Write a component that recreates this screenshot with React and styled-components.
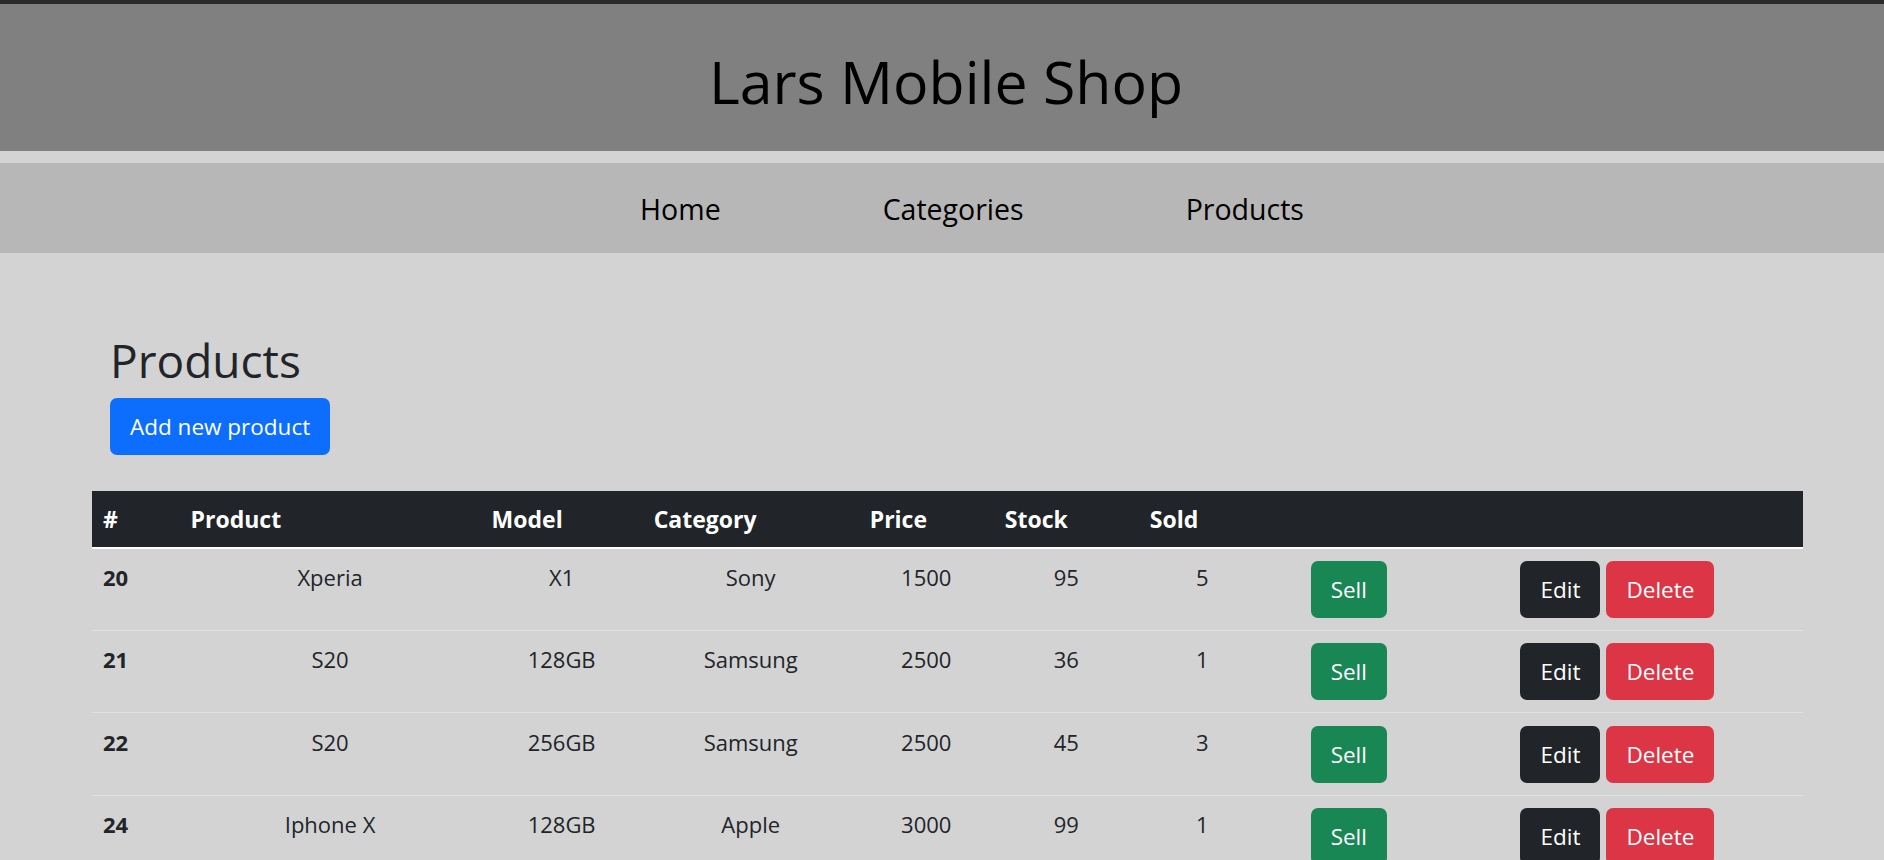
import React from "react";
import styled, { createGlobalStyle } from "styled-components";

const GlobalStyle = createGlobalStyle`
  body {
    margin: 0;
    background-color: #d3d3d3;
    font-family: "Open Sans", "Noto Sans", Arial, sans-serif;
    color: #212529;
  }
`;

// Page header with the shop name
const Header = styled.header`
  height: 151px;
  box-sizing: border-box;
  border-top: 4px solid #2b2b2b;
  background-color: #808080;
  display: flex;
  align-items: center;
  justify-content: center;
  padding-top: 6px;
`;

const ShopTitle = styled.h1`
  margin: 0 0 0 8px;
  font-size: 59px;
  font-weight: 400;
  color: #000;
  line-height: normal;
`;

const Nav = styled.nav`
  margin-top: 12px;
  height: 90px;
  background-color: #b7b7b7;
  display: flex;
  align-items: center;
  justify-content: center;
  gap: 162px;
  padding-left: 60px;
  padding-top: 2px;
  box-sizing: border-box;
`;

const NavLink = styled.a`
  font-size: 28.5px;
  color: #000;
  text-decoration: none;
  line-height: normal;
  cursor: pointer;
`;

const Main = styled.main`
  padding: 80px 81px 0 92px;
`;

const Intro = styled.div`
  padding-left: 18px;
  margin-bottom: 36px;
`;

const PageTitle = styled.h2`
  margin: 0 0 10px 0;
  font-size: 46px;
  font-weight: 500;
  line-height: 1.2;
  color: #212529;
`;

const colors = {
  primary: "#0d6efd",
  success: "#198754",
  dark: "#212529",
  danger: "#dc3545",
};

const Button = styled.button`
  display: inline-flex;
  align-items: center;
  justify-content: center;
  height: 57px;
  padding: 0 20px;
  border: none;
  border-radius: 7px;
  font-family: inherit;
  font-size: 22.5px;
  color: #fff;
  background-color: ${(p) => colors[p.$variant] || colors.primary};
  vertical-align: top;
  cursor: pointer;
`;

const Table = styled.table`
  width: 100%;
  border-collapse: collapse;
  table-layout: fixed;
`;

const Col = styled.col`
  width: ${(p) => p.$w}px;
`;

const HeadCell = styled.th`
  background-color: #212529;
  color: #fff;
  font-size: 23px;
  font-weight: 700;
  line-height: 1.5;
  text-align: left;
  padding: 10.5px 11px;
  border-bottom: 2px solid #fff;
`;

const Cell = styled.td`
  font-size: 22px;
  line-height: 1.5;
  text-align: ${(p) => (p.$left ? "left" : "center")};
  font-weight: ${(p) => (p.$bold ? 700 : 400)};
  vertical-align: top;
  padding: 12.2px 11px 12.2px;
  border-bottom: 1px solid #dee2e6;
  color: #212529;
`;

const ActionGroup = styled.div`
  display: flex;
  justify-content: center;
  gap: 6px;
`;

const columns = [
  { label: "#", width: 87.5 },
  { label: "Product", width: 301 },
  { label: "Model", width: 162 },
  { label: "Category", width: 216 },
  { label: "Price", width: 135 },
  { label: "Stock", width: 145 },
  { label: "Sold", width: 127 },
  { label: "", width: 166 },
  { label: "", width: 371 },
];

const products = [
  { id: 20, name: "Xperia", model: "X1", category: "Sony", price: 1500, stock: 95, sold: 5 },
  { id: 21, name: "S20", model: "128GB", category: "Samsung", price: 2500, stock: 36, sold: 1 },
  { id: 22, name: "S20", model: "256GB", category: "Samsung", price: 2500, stock: 45, sold: 3 },
  { id: 24, name: "Iphone X", model: "128GB", category: "Apple", price: 3000, stock: 99, sold: 1 },
];

const App = () => {
  return (
    <>
      <GlobalStyle />
      <Header>
        <ShopTitle>Lars Mobile Shop</ShopTitle>
      </Header>
      <Nav>
        <NavLink>Home</NavLink>
        <NavLink>Categories</NavLink>
        <NavLink>Products</NavLink>
      </Nav>
      <Main>
        <Intro>
          <PageTitle>Products</PageTitle>
          <Button $variant="primary">Add new product</Button>
        </Intro>
        <Table>
          <colgroup>
            {columns.map((c, i) => (
              <Col key={i} $w={c.width} />
            ))}
          </colgroup>
          <thead>
            <tr>
              {columns.map((c, i) => (
                <HeadCell key={i}>{c.label}</HeadCell>
              ))}
            </tr>
          </thead>
          <tbody>
            {products.map((p) => (
              <tr key={p.id}>
                <Cell $left $bold>{p.id}</Cell>
                <Cell>{p.name}</Cell>
                <Cell>{p.model}</Cell>
                <Cell>{p.category}</Cell>
                <Cell>{p.price}</Cell>
                <Cell>{p.stock}</Cell>
                <Cell>{p.sold}</Cell>
                <Cell>
                  <Button $variant="success">Sell</Button>
                </Cell>
                <Cell>
                  <ActionGroup>
                    <Button $variant="dark">Edit</Button>
                    <Button $variant="danger">Delete</Button>
                  </ActionGroup>
                </Cell>
              </tr>
            ))}
          </tbody>
        </Table>
      </Main>
    </>
  );
};

export default App;
